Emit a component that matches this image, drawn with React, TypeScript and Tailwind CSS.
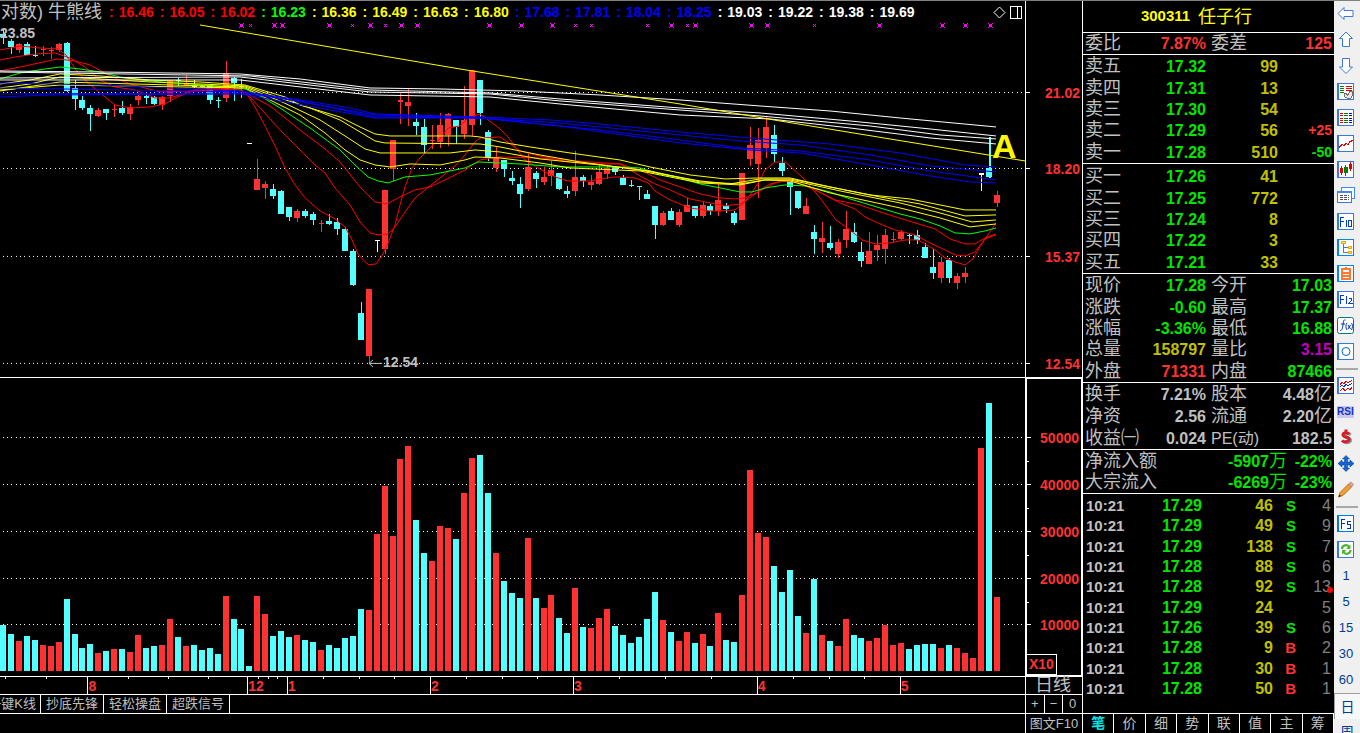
import type { ReactNode } from "react"

type Tone = "r" | "c" | "w"

const CHART_W = 1025
const PRICE_TOP = 23
const PRICE_H = 354
const VOL_TOP = 378
const VOL_H = 298
const STEP = 7.949

const FILL: Record<Tone, string> = { r: "#ff3232", c: "#54ffff", w: "#ffffff" }

// index, high, body top, body bottom, low, tone
const CANDLES: [number, number, number, number, number, Tone][] = [
  [0, 30, 34, 37, 44, "c"], [1, 39, 41, 47, 54, "c"], [2, 43, 44, 50, 53, "r"], [3, 42, 44, 55, 55, "c"],
  [4, 46, 55, 56, 57, "c"], [5, 46, 49, 50, 56, "r"], [6, 47, 50, 51, 59, "r"], [7, 43, 44, 50, 52, "r"],
  [8, 42, 43, 91, 92, "c"], [9, 80, 88, 99, 110, "c"], [10, 96, 100, 108, 110, "c"], [11, 105, 108, 114, 131, "c"],
  [12, 108, 110, 116, 117, "r"], [13, 109, 109, 113, 120, "c"], [14, 104, 109, 110, 117, "r"], [15, 101, 108, 113, 115, "c"],
  [16, 104, 107, 114, 120, "r"], [17, 93, 96, 100, 105, "r"], [18, 93, 96, 98, 104, "c"], [19, 96, 97, 104, 105, "c"],
  [20, 96, 97, 105, 110, "r"], [21, 80, 81, 96, 102, "r"], [22, 78, 80, 81, 86, "c"], [23, 75, 84, 85, 86, "r"],
  [24, 80, 86, 87, 88, "w"], [25, 85, 86, 87, 88, "c"], [26, 84, 85, 100, 104, "c"], [27, 97, 100, 101, 108, "c"],
  [28, 61, 73, 98, 102, "r"], [29, 77, 78, 83, 101, "c"], [30, 79, 86, 87, 98, "c"], [31, 143, 143, 144, 144, "w"],
  [32, 159, 179, 190, 190, "r"], [33, 181, 184, 188, 199, "r"], [34, 184, 189, 196, 199, "c"], [35, 190, 191, 214, 214, "c"],
  [36, 207, 207, 217, 221, "c"], [37, 209, 211, 218, 222, "r"], [38, 209, 211, 216, 218, "c"], [39, 212, 214, 220, 225, "c"],
  [40, 220, 223, 224, 232, "r"], [41, 214, 221, 224, 225, "c"], [42, 218, 222, 229, 235, "c"], [43, 227, 229, 251, 251, "c"],
  [44, 249, 251, 285, 286, "c"], [45, 302, 313, 340, 340, "c"], [46, 289, 289, 356, 363, "r"], [47, 240, 240, 241, 252, "w"],
  [48, 190, 190, 249, 254, "r"], [49, 140, 140, 169, 181, "r"], [50, 93, 100, 102, 124, "r"], [51, 88, 102, 106, 126, "r"],
  [52, 113, 122, 126, 135, "c"], [53, 119, 127, 145, 154, "c"], [54, 125, 140, 141, 149, "r"], [55, 113, 125, 142, 148, "r"],
  [56, 113, 114, 135, 146, "r"], [57, 120, 120, 127, 144, "c"], [58, 86, 120, 134, 139, "r"], [59, 70, 70, 125, 136, "r"],
  [60, 80, 80, 113, 125, "c"], [61, 130, 132, 157, 161, "c"], [62, 146, 158, 168, 172, "r"], [63, 160, 160, 169, 177, "c"],
  [64, 171, 178, 181, 185, "c"], [65, 177, 184, 194, 208, "c"], [66, 154, 167, 189, 191, "r"], [67, 171, 173, 179, 188, "c"],
  [68, 167, 177, 182, 185, "r"], [69, 161, 170, 176, 186, "r"], [70, 173, 173, 189, 190, "c"], [71, 186, 191, 194, 198, "c"],
  [72, 151, 177, 191, 196, "r"], [73, 175, 177, 181, 187, "c"], [74, 175, 182, 185, 190, "r"], [75, 164, 172, 184, 185, "r"],
  [76, 165, 168, 174, 179, "r"], [77, 166, 167, 172, 175, "c"], [78, 175, 178, 185, 185, "c"], [79, 180, 185, 186, 187, "c"],
  [80, 186, 186, 187, 200, "c"], [81, 190, 194, 199, 199, "c"], [82, 206, 206, 225, 239, "c"], [83, 211, 213, 225, 226, "r"],
  [84, 208, 211, 220, 220, "c"], [85, 209, 212, 225, 227, "r"], [86, 198, 205, 212, 212, "r"], [87, 206, 206, 216, 218, "c"],
  [88, 202, 205, 216, 218, "r"], [89, 204, 206, 211, 215, "c"], [90, 184, 200, 211, 216, "r"], [91, 203, 206, 209, 213, "c"],
  [92, 211, 213, 223, 225, "c"], [93, 173, 173, 220, 220, "r"], [94, 127, 145, 159, 166, "r"], [95, 128, 140, 164, 198, "r"],
  [96, 117, 127, 148, 158, "r"], [97, 125, 135, 154, 162, "c"], [98, 157, 163, 171, 176, "c"], [99, 181, 181, 187, 215, "c"],
  [100, 191, 191, 208, 209, "c"], [101, 198, 206, 214, 214, "r"], [102, 225, 232, 239, 254, "c"], [103, 222, 238, 242, 253, "r"],
  [104, 226, 243, 248, 250, "c"], [105, 239, 242, 254, 258, "r"], [106, 211, 229, 240, 248, "r"], [107, 223, 232, 242, 243, "c"],
  [108, 242, 252, 261, 267, "c"], [109, 232, 251, 264, 264, "r"], [110, 235, 245, 250, 261, "r"], [111, 229, 235, 249, 264, "r"],
  [112, 232, 239, 240, 242, "r"], [113, 230, 232, 239, 241, "r"], [114, 233, 235, 236, 244, "c"], [115, 230, 235, 240, 244, "c"],
  [116, 243, 247, 258, 258, "c"], [117, 249, 267, 273, 279, "c"], [118, 257, 262, 278, 283, "r"], [119, 258, 260, 278, 283, "c"],
  [120, 273, 276, 283, 289, "r"], [121, 267, 273, 277, 283, "r"], [123, 173, 173, 175, 191, "w"], [124, 137, 168, 177, 178, "c"],
  [125, 191, 195, 203, 207, "r"],
]

// bar heights, one per trading day
const VOLUMES = [
  46, 37, 30, 35, 31, 26, 25, 29, 72, 37, 23, 27, 18, 20, 22, 22, 19, 36, 23, 25, 26, 52, 34, 25, 26, 21, 23, 17, 75, 52, 42,
  5, 75, 57, 35, 40, 34, 36, 31, 29, 21, 26, 23, 33, 35, 62, 61, 137, 185, 135, 212, 225, 151, 118, 110, 145, 143, 132, 178,
  213, 216, 178, 118, 90, 78, 73, 133, 73, 63, 76, 53, 38, 83, 44, 43, 53, 62, 45, 36, 28, 34, 52, 79, 51, 39, 30, 39, 28, 37,
  25, 58, 31, 29, 76, 201, 138, 134, 105, 79, 101, 55, 38, 92, 36, 30, 25, 52, 36, 33, 30, 33, 46, 26, 28, 22, 26, 27, 27, 23,
  26, 23, 18, 13, 223, 268, 74,
]

const VOLUME_TONES =
  "ccrccrrrccccrcrcrrccrrcrccccrccc" +
  "rrcccrccrcccccrrrrrrccrrrcrrccrccc" +
  "rcrrccrcrrrcccccc" +
  "rcrrcrcrccrrrrccccrcrcrrccrrrrrccccrcrrrrcr"

const REDS = [
  "0,50 20,46 40,48 58,49 66,55 76,70 85,80 100,93 115,105 130,108 150,107 165,104 175,98 190,92 215,88 240,90 248,96 255,107 265,126 275,146 285,168 295,185 305,198 320,211 335,219 345,227 352,240 358,254 365,262 369,265 376,264 383,254 389,241 395,225 400,205 405,187 412,168 420,158 430,148 440,139 448,128 460,126 468,118 480,114 487,119 500,129 508,137 516,148 525,160 545,172 555,177 568,181 590,181 600,179 615,177 635,178 648,183 655,191 668,199 680,204 690,208 710,211 720,211 735,210 745,202 755,188 760,180 765,170 775,162 785,162 790,166 805,180 820,198 836,220 850,230 862,240 875,244 890,243 905,240 918,240 935,250 945,258 955,262 965,265 973,259 981,245 990,232 996,223",
  "0,60 15,57 35,54 55,53 70,58 85,67 100,80 115,87 135,90 155,98 170,98 200,88 240,90 250,97 262,110 280,130 300,150 315,165 325,173 335,188 350,205 360,222 370,233 378,235 388,234 395,227 405,212 415,198 425,190 440,178 455,166 465,155 475,142 480,138 500,137 510,144 520,151 535,155 550,158 568,162 590,164 620,164 640,176 655,184 670,190 690,199 710,203 725,206 740,204 750,198 760,190 770,184 782,181 795,182 810,187 825,195 840,203 855,209 865,217 880,224 895,230 915,235 930,243 945,250 955,255 965,256 975,252 985,239 996,235",
  "0,71 25,66 57,59 75,61 90,65 110,76 130,84 160,92 190,91 240,89 255,98 270,106 300,130 325,149 340,162 360,187 375,202 387,204 400,197 415,190 430,187 445,180 465,170 480,160 500,157 540,158 590,162 620,164 640,170 660,180 680,187 700,194 720,198 735,199 745,198 760,191 775,183 790,180 815,190 835,200 860,205 880,212 915,223 935,229 950,239 965,244 975,244 985,238 996,234",
]

const GREEN =
  "0,79 20,73 45,69 60,67 80,69 100,72 120,77 150,81 175,83 215,86 245,89 262,97 280,108 310,128 340,150 355,165 368,177 378,181 388,183 405,177 430,175 445,172 465,168 478,162 500,163 520,164 560,167 620,167 640,168 660,174 680,178 700,184 720,188 740,192 752,192 765,188 785,185 805,186 830,192 850,199 880,208 900,214 920,219 940,226 955,233 970,234 985,231 996,228"

const YELLOWS = [
  "0,84 30,80 60,74 100,76 150,80 200,82 245,85 265,91 285,97 300,105 340,117 360,127 375,134 390,136 470,136 480,137 500,142 530,147 570,153 620,160 650,167 690,175 725,179 760,178 790,178 830,187 870,195 910,199 940,205 965,210 996,210",
  "0,88 30,84 60,77 100,79 150,82 200,84 245,86 280,98 310,108 340,120 360,132 375,141 385,143 480,144 500,147 540,155 580,162 640,170 700,181 730,184 760,179 790,179 840,189 880,197 920,204 965,216 996,215",
  "0,91 60,82 245,87 280,101 320,120 345,136 365,149 380,153 450,153 475,150 500,152 540,159 600,165 650,171 700,182 740,184 765,180 790,180 840,191 900,203 940,213 972,222 996,220",
  "0,90 60,85 245,88 270,100 300,115 325,133 345,150 360,160 375,165 390,167 410,164 440,165 465,160 475,157 500,158 540,163 570,168 640,171 700,183 740,185 765,180 790,181 830,193 900,208 940,218 970,227 996,224",
]

const BLUES = [
  "0,83 100,85 240,91 300,100 350,108 375,114 480,117 550,120 600,124 680,132 750,138 830,144 900,153 965,165 996,167",
  "0,88 245,92 375,115 480,118 560,123 680,135 740,141 800,145 870,155 930,166 996,172",
  "0,94 240,93 300,101 375,117 480,118 600,130 680,140 740,148 800,151 870,160 930,171 996,180",
  "0,97 50,95 240,94 375,118 480,118 560,126 680,143 750,150 800,153 870,165 930,176 970,182 996,183",
]

const WHITES = [
  "0,71 100,72 240,74 300,79 370,88 440,89 520,91 600,95 680,100 760,106 830,111 900,118 996,127",
  "0,72 250,76 370,90 490,93 560,99 680,108 760,113 850,121 930,129 996,136",
  "0,78 240,77 370,92 490,94 560,101 680,110 760,116 870,126 940,135 996,139",
  "0,80 240,80 370,95 490,97 560,104 680,115 770,119 850,128 930,138 996,144",
]

const BIG_MARKS = [241, 274, 282, 329, 370, 401, 417, 489, 521, 552, 671, 695, 751, 767, 879, 942, 965, 990]
const SMALL_MARKS = [250, 352, 385, 575, 591, 647, 687, 814]

const LEGEND = [
  { color: "text-[#ff0000]", values: ["16.46", "16.05", "16.02"] },
  { color: "text-[#00ff00]", values: ["16.23"] },
  { color: "text-[#ffff00]", values: ["16.36", "16.49", "16.63", "16.80"] },
  { color: "text-[#0000ff]", values: ["17.68", "17.81", "18.04", "18.25"] },
  { color: "text-white", values: ["19.03", "19.22", "19.38", "19.69"] },
]

const MONTHS = [
  { label: "", span: 88 },
  { label: "8", span: 160 },
  { label: "12", span: 39 },
  { label: "1", span: 143 },
  { label: "2", span: 143 },
  { label: "3", span: 184 },
  { label: "4", span: 143 },
  { label: "5", span: 125 },
]

const WEEK_TICKS = [5, 46, 128, 168, 208, 258, 268, 277, 323, 359, 394, 466, 502, 537, 619, 665, 711, 793, 829, 864]

const SELLS = [
  ["卖五", "17.32", "99", ""],
  ["卖四", "17.31", "13", ""],
  ["卖三", "17.30", "54", ""],
  ["卖二", "17.29", "56", "+25"],
  ["卖一", "17.28", "510", "-50"],
]

const BUYS = [
  ["买一", "17.26", "41", ""],
  ["买二", "17.25", "772", ""],
  ["买三", "17.24", "8", ""],
  ["买四", "17.22", "3", ""],
  ["买五", "17.21", "33", ""],
]

const G = "text-[#00e600]"
const R = "text-[#ff3232]"
const Y = "text-[#c0c000]"
const M = "text-[#c000c0]"
const S = "text-[#c0c0c0]"

const RATIO = [["委比", "7.87%", R, "委差", "125", R]]

const QUOTES = [
  ["现价", "17.28", G, "今开", "17.03", G],
  ["涨跌", "-0.60", G, "最高", "17.37", G],
  ["涨幅", "-3.36%", G, "最低", "16.88", G],
  ["总量", "158797", Y, "量比", "3.15", M],
  ["外盘", "71331", R, "内盘", "87466", G],
]

const FUNDAMENTALS = [
  ["换手", "7.21%", S, "股本", "4.48亿", S],
  ["净资", "2.56", S, "流通", "2.20亿", S],
  ["收益㈠", "0.024", S, "PE(动)", "182.5", S],
]

const TRADES = [
  ["17.29", "46", "S", "4"],
  ["17.29", "49", "S", "9"],
  ["17.29", "138", "S", "7"],
  ["17.28", "88", "S", "6"],
  ["17.28", "92", "S", "13"],
  ["17.29", "24", "", "5"],
  ["17.26", "39", "S", "6"],
  ["17.28", "9", "B", "2"],
  ["17.28", "30", "B", "1"],
  ["17.28", "50", "B", "1"],
]

const dayX = (i: number) => Math.round(3 + STEP * i)

const at = (x: number, y: number) => ({
  left: `${(x / CHART_W) * 100}%`,
  top: `${((y - PRICE_TOP) / PRICE_H) * 100}%`,
})

function DottedLine({ y }: { y: number }) {
  return <line x1={3} x2={CHART_W} y1={y + 0.5} y2={y + 0.5} stroke="#fff" strokeDasharray="1 3 1 3 1 4" />
}

function Lines({ points, stroke }: { points: string[]; stroke: string }) {
  return (
    <g fill="none" stroke={stroke}>
      {points.map((p) => (
        <polyline key={p} points={p} />
      ))}
    </g>
  )
}

function PriceChart() {
  return (
    <div className="relative flex min-h-0 flex-1">
      <svg
        viewBox={`0 ${PRICE_TOP} ${CHART_W} ${PRICE_H}`}
        preserveAspectRatio="none"
        shapeRendering="crispEdges"
        className="h-full w-full"
      >
        {[92, 168, 256, 363].map((y) => (
          <DottedLine key={y} y={y} />
        ))}
        {CANDLES.map(([i, high, top, bottom, low, tone]) => (
          <g key={i} fill={FILL[tone]}>
            <rect x={dayX(i)} y={high} width={i === 124 ? 2 : 1} height={low - high} />
            <rect x={dayX(i) - (bottom - top > 2 ? 3 : 2)} y={top} width={bottom - top > 2 ? 6 : 5} height={bottom - top} />
          </g>
        ))}
        <Lines points={REDS} stroke="#ff0000" />
        <Lines points={[GREEN]} stroke="#00ff00" />
        <Lines points={YELLOWS} stroke="#ffff00" />
        <Lines points={BLUES} stroke="#0000ff" />
        <Lines points={WHITES} stroke="#ffffff" />
        <Lines points={["200,25 460,69 680,104 780,121 890,139 1025,161"]} stroke="#ffff00" />
        <g fill="#ff00ff" stroke="#ff00ff">
          {BIG_MARKS.map((x) => (
            <g key={x}>
              <rect x={x - 1} y={24} width={3} height={3} stroke="none" />
              <path d={`M${x - 2} 23l5 5M${x + 3} 23l-5 5`} />
            </g>
          ))}
          {SMALL_MARKS.map((x) => (
            <path key={x} d={`M${x - 1} 24h1v1h1v1h1v1h-1v-1h-1v-1h-1zM${x + 1} 24h1v1h-1zM${x - 1} 26h1v1h-1z`} stroke="none" />
          ))}
        </g>
        <path d="M369 363.5h13M373 360l-4 3.5 4 3.5" fill="none" stroke="#c0c0c0" />
      </svg>
      <span className="absolute -translate-y-1/2 text-sm font-bold text-[#c0c0c0]" style={at(0, 33)}>
        23.85
      </span>
      <span className="absolute -translate-y-1/2 text-sm font-bold text-[#c0c0c0]" style={at(383, 362)}>
        12.54
      </span>
      <span className="absolute -translate-y-1/2 text-[34px] leading-none font-bold text-[#fff500]" style={at(992, 146)}>
        A
      </span>
    </div>
  )
}

function VolumeChart() {
  return (
    <svg
      viewBox={`0 ${VOL_TOP} ${CHART_W} ${VOL_H}`}
      preserveAspectRatio="none"
      shapeRendering="crispEdges"
      className="h-full min-w-0 flex-1"
    >
      {[437, 484, 531, 578, 624].map((y) => (
        <DottedLine key={y} y={y} />
      ))}
      {VOLUMES.map((h, i) => (
        <rect key={i} x={dayX(i) - 3} y={671 - h} width={6} height={h} fill={FILL[VOLUME_TONES[i] as Tone]} />
      ))}
    </svg>
  )
}

function AxisStop({ span, label, minor }: { span: number; label: string; minor?: boolean }) {
  return (
    <div className="relative flex min-h-0 basis-0 items-end justify-end pr-0.5" style={{ flexGrow: span }}>
      {minor && <i className="absolute top-1/2 left-0 h-px w-0.5 bg-white" />}
      <i className="absolute bottom-0 left-0 h-px w-1 bg-white" />
      <span className="translate-y-1/2 text-sm leading-4 font-bold text-[#ff3232]">{label}</span>
    </div>
  )
}

function Legend() {
  return (
    <div className="flex h-[22px] items-center pl-px pr-[3px]">
      <span className="w-[108px] shrink-0 text-lg leading-5 whitespace-pre text-[#c0c0c0]">对数) 牛熊线</span>
      <div className="flex flex-1 gap-[6px] overflow-hidden text-sm font-bold">
        {LEGEND.map((group) =>
          group.values.map((v) => (
            <span key={v} className={`flex gap-[5px] ${group.color}`}>
              <span>:</span>
              <span>{v}</span>
            </span>
          ))
        )}
      </div>
      <button type="button" aria-label="Marker" className="mr-1">
        <svg width="13" height="13" viewBox="0 0 13 13" fill="none" stroke="#fff">
          <path d="M6.5 1L12 6.5 6.5 12 1 6.5z" />
        </svg>
      </button>
      <button type="button" aria-label="Split view">
        <svg width="12" height="13" viewBox="0 0 12 13" fill="none" stroke="#fff" shapeRendering="crispEdges">
          <path d="M.5.5h11v12H.5zM7.5.5v12" />
        </svg>
      </button>
    </div>
  )
}

function ChartArea() {
  return (
    <main className="flex min-w-0 flex-1 flex-col">
      <div className="flex min-h-0 grow-[377] basis-0 border-b border-white">
        <div className="flex min-w-0 flex-1 flex-col">
          <Legend />
          <PriceChart />
        </div>
        <div className="flex w-[57px] flex-col border-l border-white">
          <AxisStop span={92} label="21.02" />
          <AxisStop span={76} label="18.20" />
          <AxisStop span={88} label="15.37" />
          <AxisStop span={107} label="12.54" />
          <div className="basis-0" style={{ flexGrow: 13 }} />
        </div>
      </div>

      <div className="flex min-h-0 grow-[299] basis-0 border-b border-white">
        <VolumeChart />
        <div className="flex w-[57px] border-l border-white">
          <div className="flex flex-1 flex-col border border-white">
            <AxisStop span={59} label="50000" />
            <AxisStop span={47} label="40000" minor />
            <AxisStop span={47} label="30000" minor />
            <AxisStop span={47} label="20000" minor />
            <AxisStop span={46} label="10000" minor />
            <div className="flex basis-0 items-end" style={{ flexGrow: 50 }}>
              <span className="border-t border-r border-b border-white px-0.5 text-sm leading-[19px] font-bold text-[#ff3232]">
                X10
              </span>
            </div>
          </div>
        </div>
      </div>

      <div className="flex h-[18px] border-b border-white">
        <div className="relative flex flex-1">
          <svg
            viewBox="0 0 1025 3"
            preserveAspectRatio="none"
            shapeRendering="crispEdges"
            className="absolute inset-x-0 top-0 h-[3px] w-full"
          >
            {WEEK_TICKS.map((x) => (
              <rect key={x} x={x} y={0} width={1} height={2} fill="#fff" />
            ))}
          </svg>
          {MONTHS.map((m) => (
            <span
              key={m.label}
              className="basis-0 border-white text-sm leading-[18px] font-bold text-[#ff3232] not-first-of-type:border-l"
              style={{ flexGrow: m.span }}
            >
              {m.label}
            </span>
          ))}
        </div>
        <div className="w-[57px] border-l border-white pl-[9px] text-lg leading-[17px] text-[#c0c0c0]">日线</div>
      </div>

      <div className="flex h-[19px] border-b border-white text-[13px] leading-[18px] text-[#c0c0c0]">
        <div className="flex flex-1">
          <button type="button" className="flex w-[41px] justify-end overflow-hidden border-r border-white pr-1 whitespace-nowrap">
            一键K线
          </button>
          {["抄底先锋", "轻松操盘", "超跌信号"].map((t) => (
            <button key={t} type="button" className="w-[63px] border-r border-white whitespace-nowrap">
              {t}
            </button>
          ))}
        </div>
        <div className="grid w-[57px] grid-cols-3 divide-x divide-white border-l border-white">
          <button type="button">+</button>
          <button type="button">−</button>
          <button type="button">0</button>
        </div>
      </div>

      <div className="flex h-[19px] justify-end text-[13px] leading-[19px] text-[#c0c0c0]">
        <button type="button" className="w-[57px] border-l border-white whitespace-nowrap">
          图文F10
        </button>
      </div>
    </main>
  )
}

function BookTable({ rows }: { rows: string[][] }) {
  return (
    <table className="mt-px h-[107px] w-full table-fixed text-right leading-[21px] font-bold">
      <colgroup>
        <col className="w-[38px]" />
        <col className="w-[85px]" />
        <col className="w-[72px]" />
        <col />
      </colgroup>
      <tbody>
        {rows.map(([name, price, vol, diff]) => (
          <tr key={name}>
            <th className="pl-0.5 text-left text-lg leading-[21px] font-normal whitespace-nowrap text-[#c0c0c0]">{name}</th>
            <td className="text-[#00e600]">{price}</td>
            <td className="text-[#c0c000]">{vol}</td>
            <td className={`pr-0.5 text-sm leading-[21px] ${diff.startsWith("+") ? R : G}`}>{diff}</td>
          </tr>
        ))}
      </tbody>
    </table>
  )
}

function PairTable({ rows, height }: { rows: string[][]; height: string }) {
  return (
    <table className={`w-full table-fixed text-right leading-[21px] font-bold ${height}`}>
      <colgroup>
        <col className="w-[38px]" />
        <col className="w-[85px]" />
        <col className="w-[42px]" />
        <col />
      </colgroup>
      <tbody>
        {rows.map(([a, av, ac, b, bv, bc]) => (
          <tr key={a}>
            <th className="pl-0.5 text-left text-lg leading-[21px] font-normal whitespace-nowrap text-[#c0c0c0]">{a}</th>
            <td className={ac}>{av}</td>
            <th className="pl-[5px] text-left text-lg leading-[21px] font-normal whitespace-nowrap text-[#c0c0c0]">
              {b.startsWith("PE") ? <span className="text-base leading-[21px]">{b}</span> : b}
            </th>
            <td className={`pr-0.5 whitespace-nowrap ${bc}`}>
              {bv.replace("亿", "")}
              {bv.endsWith("亿") && <span className="text-lg leading-[21px] font-normal">亿</span>}
            </td>
          </tr>
        ))}
      </tbody>
    </table>
  )
}

function QuotePanel() {
  return (
    <aside className="flex w-[252px] shrink-0 flex-col border-l border-white text-base">
      <h1 className="flex h-8 items-center justify-center gap-2 border-b border-white pr-6 text-[#ffff00]">
        <span className="text-[15px] font-bold">300311</span>
        <span className="text-lg">任子行</span>
      </h1>
      <section className="border-b border-white">
        <PairTable rows={RATIO} height="h-[21px]" />
      </section>
      <section className="border-b border-white">
        <BookTable rows={SELLS} />
      </section>
      <section className="border-b border-white pt-px">
        <BookTable rows={BUYS} />
      </section>
      <section className="border-b border-white pt-px">
        <PairTable rows={QUOTES} height="h-[107px]" />
      </section>
      <section className="border-b border-white pt-px">
        <PairTable rows={FUNDAMENTALS} height="h-[65px]" />
      </section>
      <section className="border-b border-white pt-px">
        <table className="w-full table-fixed text-right leading-[21px] font-bold text-[#00e600]">
          <tbody>
            {[
              ["净流入额", "-5907", "-22%"],
              ["大宗流入", "-6269", "-23%"],
            ].map(([name, amount, pct]) => (
              <tr key={name}>
                <th className="w-[90px] pl-0.5 text-left text-lg leading-[21px] font-normal whitespace-nowrap text-[#c0c0c0]">
                  {name}
                </th>
                <td className="w-[114px]">
                  {amount}
                  <span className="text-lg leading-[21px] font-normal">万</span>
                </td>
                <td className="pr-0.5">{pct}</td>
              </tr>
            ))}
          </tbody>
        </table>
      </section>
      <section className="min-h-0 flex-1 overflow-hidden pt-0.5">
        <table className="h-[203px] w-full table-fixed text-right leading-5 font-bold">
          <colgroup>
            <col className="w-[48px]" />
            <col className="w-[71px]" />
            <col className="w-[71px]" />
            <col className="w-[23px]" />
            <col />
          </colgroup>
          <tbody>
            {TRADES.map(([price, vol, side, count], i) => (
              <tr key={i}>
                <td className="pl-[3px] text-left text-[15px] leading-5 text-[#c0c0c0]">10:21</td>
                <td className="text-[#00e600]">{price}</td>
                <td className="text-[#c0c000]">{vol}</td>
                <td className={`text-[15px] leading-5 ${side === "B" ? R : G}`}>{side}</td>
                <td className="relative pr-[3px] font-normal text-[#808080]">
                  {count}
                  {count === "13" && <i className="absolute right-px bottom-1 size-1.5 rounded-full bg-[#ff0000]" />}
                </td>
              </tr>
            ))}
          </tbody>
        </table>
      </section>
      <nav className="flex h-5 divide-x divide-white border-t border-r border-white text-sm leading-[19px] text-[#c0c0c0]">
        {["笔", "价", "细", "势", "联", "值", "主", "筹"].map((t, i) => (
          <button key={t} type="button" className={`flex-1 ${i === 0 ? "font-bold text-[#00e6e6]" : ""}`}>
            {t}
          </button>
        ))}
      </nav>
    </aside>
  )
}

// Blue-edged white tile shared by most of the toolbar icons
function Tile({ children, edge = "#3c78dc" }: { children?: ReactNode; edge?: string }) {
  return (
    <g shapeRendering="crispEdges">
      <rect x=".5" y=".5" width="16" height="16" fill="#fff" stroke={edge} />
      <path d="M1 0v17" stroke={edge} strokeWidth="2" />
      {children}
    </g>
  )
}

const TOOLS: { name: string; art: ReactNode }[] = [
  {
    name: "Back",
    art: <path d="M1 8.5l6-6v3h9v6H7v3z" fill="#fff" stroke="#3c78dc" />,
  },
  {
    name: "Up",
    art: <path d="M9 1l6.5 6.5h-3v8h-7v-8h-3z" fill="#fff" stroke="#3c78dc" />,
  },
  {
    name: "Down",
    art: <path d="M9 16.500l6.5-6.5h-3V1.5h-7V10h-3z" fill="#fff" stroke="#3c78dc" />,
  },
  {
    name: "Quote refresh",
    art: (
      <Tile>
        <path d="M3 3.500h4M3 5.500h4M3 7.500h4M3 9.500h4" stroke="#008000" />
        <path d="M9 3.500h6M9 5.500h6M9 7.500h6" stroke="#e00000" />
        <path d="M7.500 10.500v3l3 2h3l2-3v-4h-3l-1 3-1 1-1-2z" fill="#e8e8e8" stroke="#707070" />
      </Tile>
    ),
  },
  {
    name: "Quote list",
    art: (
      <Tile>
        <path d="M3 4.500h3M3 6.500h3M3 9.500h3M3 11.500h3M3 13.500h3" stroke="#e00000" />
        <path d="M7 4.500h4M7 6.500h4M7 9.500h4M7 11.500h4M7 13.500h4" stroke="#008000" />
        <path d="M12 4.500h3M12 6.500h3M12 9.500h3M12 11.500h3M12 13.500h3" stroke="#0000e0" />
      </Tile>
    ),
  },
  {
    name: "Intraday line",
    art: (
      <Tile>
        <path d="M2 12.500l3-3 2 1 2-2 2 1 2-3 3-1" fill="none" stroke="#e00000" />
      </Tile>
    ),
  },
  {
    name: "Candles",
    art: (
      <Tile>
        <path d="M3 7h3v5H3zM12 3h3v5h-3zM4 5h1v9H4zM13 1h1v9h-1z" fill="#e00000" />
        <path d="M7 6h4v6H7zM8 4h1v11H8z" fill="#008000" />
      </Tile>
    ),
  },
  {
    name: "Windows",
    art: (
      <g shapeRendering="crispEdges">
        <path d="M4.500.5h13v11h-13z" fill="#fff" stroke="#3c8cf0" />
        <path d="M.5 4.500h14v11H.5z" fill="#fff" stroke="#3c78dc" />
        <path d="M0 5h15" stroke="#3c8cf0" strokeWidth="2" />
        <path d="M3 8.500h9M3 10.500h9M3 12.500h9" stroke="#505050" strokeDasharray="3 1" />
      </g>
    ),
  },
  {
    name: "F10",
    art: (
      <Tile>
        <path d="M3.500 14V4.500H7M3.500 8.500H7M9.500 7v7M11.500 7.500h3v6h-3z" fill="none" stroke="#003cc8" />
      </Tile>
    ),
  },
  {
    name: "Tree",
    art: (
      <Tile edge="#0087f0">
        <path d="M6.500 5v8.500H11M6.500 8.500H11" fill="none" stroke="#3c78ff" />
        <path d="M4.500 2.500h4v2h-4zM11.500 7.500h3v2h-3zM11.500 12.500h3v2h-3z" fill="#ffe878" stroke="#f0a800" />
      </Tile>
    ),
  },
  {
    name: "Watch list",
    art: (
      <Tile edge="#0087f0">
        <path d="M5 4h8v10H5zM5 7.500h8M5 10.500h8M9 2v2" fill="none" stroke="#ff7832" strokeWidth="2" />
      </Tile>
    ),
  },
  {
    name: "F12",
    art: (
      <Tile>
        <path d="M3.500 13V4.500H7M3.500 8.500H7M9.500 5v8M11.500 7.500h3v2l-3 3h4" fill="none" stroke="#003cc8" />
      </Tile>
    ),
  },
  {
    name: "Formula",
    art: (
      <>
        <rect x=".5" y=".5" width="16" height="16" rx="2" fill="#fff" stroke="#007878" />
        <path
          d="M8.500 3C6.500 2 6.500 5 6 8s-1 6-3 5.500M4 7h4M10 6c-1.500 2-1.500 4.500 0 7M11 8l2.500 4M13.500 8L11 12M14.500 6c1.500 2 1 5 0 7"
          fill="none"
          stroke="#0032b4"
        />
      </>
    ),
  },
  {
    name: "Circle",
    art: (
      <>
        <Tile />
        <circle cx="9" cy="8.500" r="4" fill="none" stroke="#0064c8" />
      </>
    ),
  },
]

const MORE_TOOLS: { name: string; art: ReactNode }[] = [
  {
    name: "Indicators",
    art: (
      <Tile>
        <path d="M3 7.500l2-2 2 1 2-2 2 1 4-2" fill="none" stroke="#e00000" />
        <path d="M3 9.500l2-1 2 1 2-2 2 1 4-2" fill="none" stroke="#0032e0" />
        <path d="M3 13.500l3-2 2 2 3-2 2 1 2-2" fill="none" stroke="#e00000" />
      </Tile>
    ),
  },
  { name: "RSI", art: null },
  {
    name: "Simulate",
    art: (
      <>
        <path d="M13.500 6c-1.500-2-6-1.500-6 1s6 1.500 6 4-4.500 4-7 1.500" fill="none" stroke="#909090" strokeWidth="3" />
        <path d="M12 5c-1.500-2-6-1.500-6 1s6 1.500 6 4-4.500 4-7 1.500M9 .5v3" fill="none" stroke="#d21e28" strokeWidth="3" />
      </>
    ),
  },
  {
    name: "Move",
    art: (
      <path
        d="M9 .5L12.500 4h-2v3H13V5l4 3.500-4 3.500v-2h-2.500v3h2L9 16.500 5.500 13h2v-3H5v2L1 8.500 5 5v2h2.500V4h-2z"
        fill="#1464d2"
        stroke="#00328c"
        strokeWidth=".5"
      />
    ),
  },
  {
    name: "Draw",
    art: (
      <>
        <path d="M1.500 16L3 11.500 11.500 3l3 3L6 14.500z" fill="#f0a032" stroke="#965000" strokeWidth=".7" />
        <path d="M11.500 3L13 1.500c1.500-1 4 1.500 3 3L14.500 6z" fill="#e6a0a0" stroke="#966464" strokeWidth=".5" />
        <path d="M1.500 16l1-2.500L4 15z" fill="#202020" />
      </>
    ),
  },
]

const LAST_TOOLS: { name: string; art: ReactNode }[] = [
  {
    name: "F5",
    art: (
      <Tile edge="#0078e6">
        <path d="M4.500 14V4.500H8M4.500 8.500H8M14 6.500h-3.500v3h3v4h-3.500" fill="none" stroke="#0032b4" />
      </Tile>
    ),
  },
  {
    name: "Refresh",
    art: (
      <>
        <Tile />
        <path d="M5 8c0-4 5-5 7-2M13.500 9c0 4-5 5-7 2" fill="none" stroke="#50b432" strokeWidth="2.200" />
        <path d="M13.500 3.500V8H9zM5 13.500V9h4.500z" fill="#50b432" />
      </>
    ),
  },
]

function ToolButton({ name, art }: { name: string; art: ReactNode }) {
  return (
    <button type="button" aria-label={name} className="flex h-[26px] w-full shrink-0 items-center pl-[3px]">
      {art ? (
        <svg width="18" height="18" viewBox="0 0 18 18">
          {art}
        </svg>
      ) : (
        <span className="bg-[#c8c8f0] text-[10px] leading-3 font-bold text-[#1432c8]">{name}</span>
      )}
    </button>
  )
}

function Toolbar() {
  return (
    <nav className="flex w-[26px] shrink-0 flex-col overflow-hidden bg-[#f0f0f0] text-[13px] text-[#003c96]">
      {TOOLS.map((t) => (
        <ToolButton key={t.name} {...t} />
      ))}
      <hr className="mx-0.5 my-[3px] shrink-0 border-t-2 border-[#a8a8a8]" />
      {MORE_TOOLS.map((t) => (
        <ToolButton key={t.name} {...t} />
      ))}
      <hr className="mx-0.5 my-[3px] shrink-0 border-t-2 border-[#a8a8a8]" />
      {LAST_TOOLS.map((t) => (
        <ToolButton key={t.name} {...t} />
      ))}
      {["1", "5", "15", "30", "60"].map((t) => (
        <button key={t} type="button" className="h-[26px] shrink-0 pr-0.5">
          {t}
        </button>
      ))}
      <button type="button" className="h-[26px] shrink-0 border-t border-l border-[#a0a0a0] bg-[#f8f8f8] text-sm">
        日
      </button>
      <button type="button" className="h-[26px] shrink-0 text-sm">
        周
      </button>
    </nav>
  )
}

function App() {
  return (
    <div className="flex h-screen overflow-hidden border-t border-[#808080] bg-black font-['Liberation_Sans','Noto_Sans_CJK_SC',sans-serif]">
      <ChartArea />
      <QuotePanel />
      <Toolbar />
    </div>
  )
}

export default App
